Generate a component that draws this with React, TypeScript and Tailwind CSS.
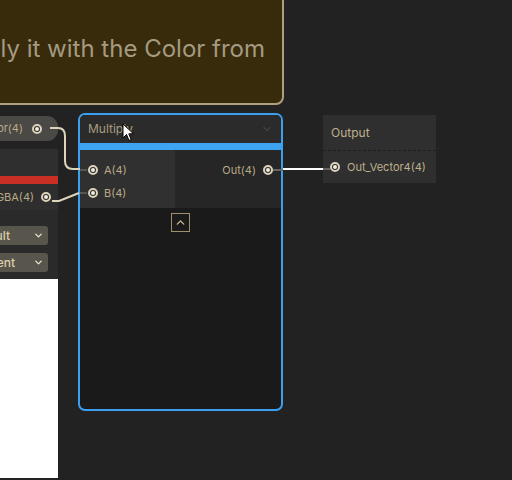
import { ChevronDown, ChevronUp } from 'lucide-react'

const font = { fontFamily: 'Inter, "Noto Sans", sans-serif' }

function Port() {
  return (
    <div className="w-[10px] h-[10px] rounded-full border-2 border-[#dcd3bb] bg-[#2a2a2a] flex items-center justify-center shrink-0">
      <div className="w-[4px] h-[4px] rounded-full bg-[#f2ecdf]" />
    </div>
  )
}

function Dropdown({ label, gap }: { label: string; gap: string }) {
  return (
    <div className="h-[19px] w-[48px] bg-[#58554d] rounded-r-[3px] flex items-center justify-end pr-[4px] overflow-hidden">
      <span className="text-[12px] font-medium text-[#dccfaa] whitespace-nowrap">{label}</span>
      <ChevronDown size={11} strokeWidth={3} className={`text-[#e8e0c8] shrink-0 ${gap}`} />
    </div>
  )
}

export default function App() {
  return (
    <div className="relative w-[512px] h-[480px] overflow-hidden bg-[#222222]" style={font}>
      {/* sticky note */}
      <div className="absolute left-[-12px] top-[-12px] w-[296px] h-[117px] bg-[#372b0b] border-2 border-[#b09f7c] rounded-br-[8px] overflow-hidden flex justify-end items-start pt-[45px] pr-[17px]">
        <span className="text-[24px] leading-[28px] text-[#a59a80] whitespace-nowrap">ly it with the Color from</span>
      </div>

      {/* left partial property pill */}
      <div className="absolute left-0 top-[116px] w-[58px] h-[25px] bg-[#4a4945] rounded-r-[11px] flex items-center justify-end pr-[16px] gap-[9px] overflow-hidden">
        <span className="text-[11px] text-[#b8aa88] whitespace-nowrap">or(4)</span>
        <Port />
      </div>

      {/* left partial node */}
      <div className="absolute left-0 top-[149px] w-[58px] bottom-[2px] flex flex-col overflow-hidden">
        <div className="h-[27px] bg-[#2f2f2f]" />
        <div className="h-[8px] bg-[#c92f23]" />
        <div className="h-[26px] bg-[#2e2e2e] flex items-center justify-end pr-[7px] gap-[7px]">
          <span className="text-[11px] text-[#b8aa88] whitespace-nowrap">GBA(4)</span>
          <Port />
        </div>
        <div className="h-[69px] bg-[#2a2a2a] flex flex-col gap-[8px] pt-[16px]">
          <Dropdown label="ult" gap="ml-[23px]" />
          <Dropdown label="ent" gap="ml-[18px]" />
        </div>
        <div className="flex-1 bg-white" />
      </div>

      {/* multiply node */}
      <div className="absolute left-[78px] top-[113px] w-[205px] h-[298px] border-2 border-[#3d9ff0] rounded-[7px] bg-[#1a1a1a] overflow-hidden flex flex-col">
        <div className="h-[28px] bg-[#2b2b2b] flex items-center justify-between pl-[8px] pr-[8px] shrink-0">
          <span className="text-[12px] text-[#a89c80]">Multiply</span>
          <ChevronDown size={12} className="text-[#555555]" />
        </div>
        <div className="h-[7px] bg-[#3ea3f1] shrink-0" />
        <div className="h-[58px] flex shrink-0">
          <div className="w-[95px] bg-[#303030] flex flex-col pt-[15px] gap-[13px] pl-[8px]">
            <div className="flex items-center gap-[6px] h-[10px]">
              <Port />
              <span className="text-[11px] text-[#b8aa88]">A(4)</span>
            </div>
            <div className="flex items-center gap-[6px] h-[10px]">
              <Port />
              <span className="text-[11px] text-[#b8aa88]">B(4)</span>
            </div>
          </div>
          <div className="flex-1 bg-[#262626] flex justify-end items-start pt-[15px] pr-[8px]">
            <div className="flex items-center gap-[7px] h-[10px]">
              <span className="text-[11px] text-[#b8aa88]">Out(4)</span>
              <Port />
            </div>
          </div>
        </div>
        <div className="flex justify-center pt-[5px]">
          <div className="w-[19px] h-[19px] border border-[#a08f6c] flex items-center justify-center">
            <ChevronUp size={13} strokeWidth={2.5} className="text-[#c8bb98]" />
          </div>
        </div>
      </div>

      {/* output node */}
      <div className="absolute left-[323px] top-[115px] w-[113px] bg-[#2f2f2f] flex flex-col">
        <div className="h-[36px] flex items-center pl-[8px] border-b border-dashed border-[#1e1e1e]">
          <span className="text-[12px] text-[#bfb08c]">Output</span>
        </div>
        <div className="h-[32px] flex items-center pl-[7px] gap-[7px]">
          <Port />
          <span className="text-[11px] text-[#bfb08c]">Out_Vector4(4)</span>
        </div>
      </div>

      {/* wires */}
      <svg className="absolute inset-0 pointer-events-none" width="512" height="480">
        <path d="M 50 128 L 58 128 Q 65 128 65 136 L 65 161 Q 65 169 73 169 L 80 169" fill="none" stroke="#ddd4ba" strokeWidth="2" />
        <path d="M 52 201 L 59 201 L 79 193" fill="none" stroke="#ddd4ba" strokeWidth="2" />
        <line x1="80" y1="170" x2="87" y2="170" stroke="#555" strokeWidth="2" />
        <line x1="80" y1="193" x2="87" y2="193" stroke="#555" strokeWidth="2" />
        <line x1="273" y1="170" x2="283" y2="170" stroke="#666" strokeWidth="2" />
        <line x1="283" y1="169" x2="323" y2="169" stroke="#ffffff" strokeWidth="2" />
        <line x1="323" y1="169" x2="330" y2="169" stroke="#666" strokeWidth="2" />
      </svg>

      {/* mouse cursor */}
      <svg className="absolute left-[122px] top-[123px]" width="14" height="20" viewBox="0 0 14 20">
        <path d="M1 1 L1 15 L4.5 11.5 L7 17.5 L9.2 16.6 L6.8 10.8 L11.5 10.8 Z" fill="#ffffff" stroke="#000000" strokeWidth="1" strokeLinejoin="round" />
      </svg>
    </div>
  )
}
